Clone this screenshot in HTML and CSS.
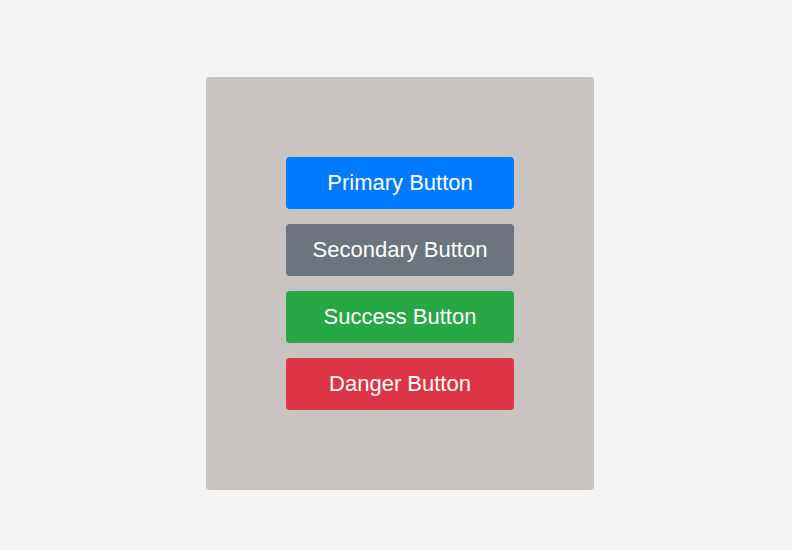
FILE: index.html
```html
<!DOCTYPE html>
<html lang="en">
<head>
<meta charset="utf-8">
<title>Buttons</title>
<link rel="stylesheet" href="styles.css">
</head>
<body>
<main class="page">
  <section class="card">
    <button class="btn btn-primary">Primary Button</button>
    <button class="btn btn-secondary">Secondary Button</button>
    <button class="btn btn-success">Success Button</button>
    <button class="btn btn-danger">Danger Button</button>
  </section>
</main>
</body>
</html>
```

FILE: styles.css
```css
html, body {
  margin: 0;
  padding: 0;
  background: #f4f4f4;
  font-family: "Liberation Sans", Arial, sans-serif;
}
.page {
  display: flex;
  justify-content: center;
  padding: 77px 0 0 8px;
}
.card {
  width: 228px;
  padding: 80px;
  background: #c8c3c0;
  border-radius: 4px;
  display: flex;
  flex-direction: column;
  gap: 15px;
}
.btn {
  height: 52px;
  border: none;
  border-radius: 4px;
  color: #ffffff;
  font-family: "Liberation Sans", Arial, sans-serif;
  font-size: 22px;
  padding: 0;
  cursor: pointer;
}
.btn-primary { background: #007bff; }
.btn-secondary { background: #6c757d; }
.btn-success { background: #28a745; }
.btn-danger { background: #dc3545; }
```
